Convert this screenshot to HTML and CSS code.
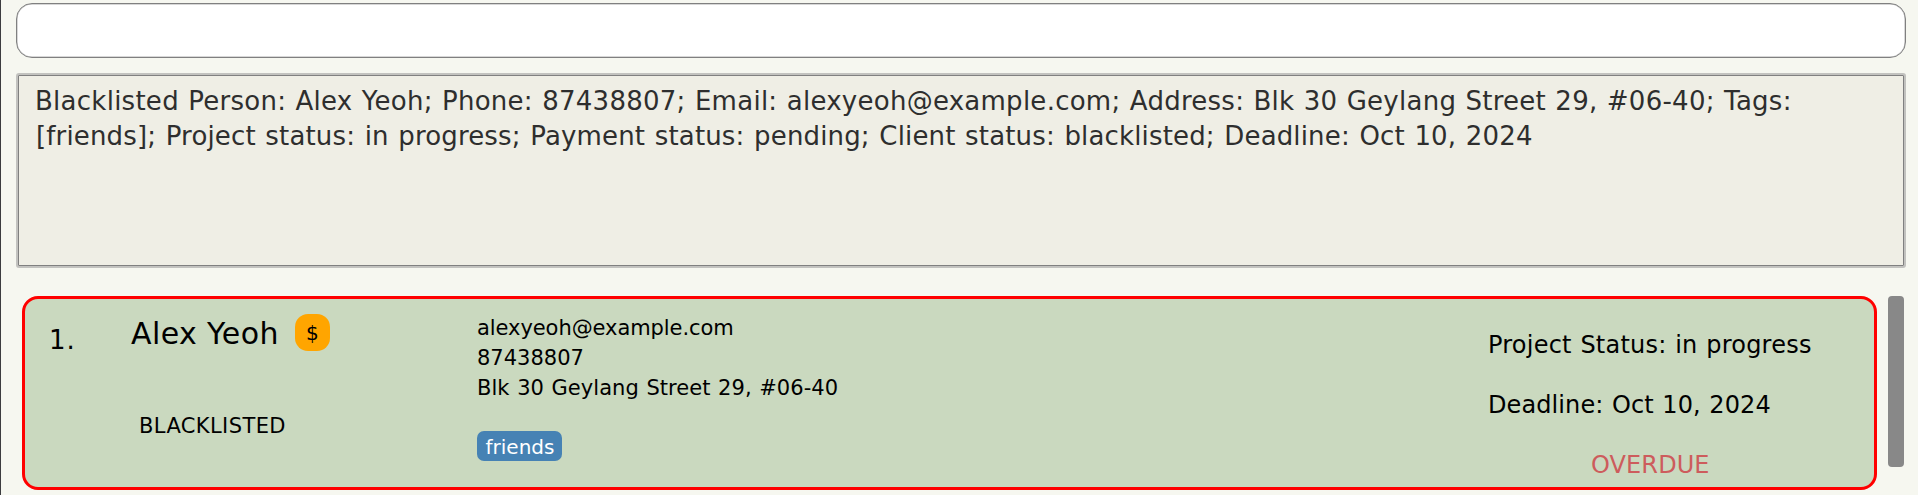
FILE: index.html
```html
<!DOCTYPE html>
<html lang="en">
<head>
<meta charset="utf-8">
<title>Address Book</title>
<link rel="stylesheet" href="styles.css">
</head>
<body>
<main class="app">
  <input class="command" type="text" aria-label="Command">
  <section class="result">
    <div class="line-first">Blacklisted Person: Alex Yeoh; Phone: 87438807; Email: alexyeoh@example.com; Address: Blk 30 Geylang Street 29, #06-40; Tags:</div>
    <div class="line-second">[friends]; Project status: in progress; Payment status: pending; Client status: blacklisted; Deadline: Oct 10, 2024</div>
  </section>
  <div class="list">
    <article class="card">
      <div class="index">1.</div>
      <div class="person">
        <div class="heading"><span class="name">Alex Yeoh</span><span class="payment">$</span></div>
        <div class="client">BLACKLISTED</div>
      </div>
      <div class="contact">
        <div class="email">alexyeoh@example.com</div>
        <div>87438807</div>
        <div class="address">Blk 30 Geylang Street 29, #06-40</div>
        <span class="tag">friends</span>
      </div>
      <div class="project">
        <div class="status">Project Status: in progress</div>
        <div class="deadline">Deadline: Oct 10, 2024</div>
        <div class="overdue">OVERDUE</div>
      </div>
    </article>
    <div class="scrollbar"></div>
  </div>
</main>
</body>
</html>
```
FILE: styles.css
```css
* { box-sizing: border-box; }
body {
  margin: 0;
  background: #f6f7f0;
  font-family: Verdana, "DejaVu Sans", sans-serif;
  color: #000;
}
.app {
  display: flex;
  flex-direction: column;
  height: 495px;
  padding: 3px 12px 0 15px;
  border-left: 1px solid #3c3c3f;
  overflow: hidden;
}
.command {
  flex: none;
  width: 100%;
  height: 55px;
  padding: 0 16px;
  border: 1px solid #808080;
  border-radius: 16px;
  background: #fff;
  box-shadow: inset 0 0 0 0.5px #b0b0b0;
  outline: none;
}
.result {
  flex: none;
  height: 195px;
  margin-top: 15px;
  padding: 9px 17px;
  border: 2px solid #c2c2bf;
  border-radius: 3px;
  background: #efeee5;
  box-shadow: inset 0 0 0 1px #808080;
  color: #2e2e2e;
  font-size: 26px;
  line-height: 35px;
  white-space: nowrap;
}
.line-first { letter-spacing: 0.26px; word-spacing: 0.8px; }
.line-second { padding-left: 1px; letter-spacing: 0.15px; word-spacing: 1.2px; }
.list {
  display: flex;
  gap: 11px;
  margin-top: 28px;
  padding: 0 2px 0 6px;
}
.card {
  display: flex;
  flex: 1;
  height: 194px;
  border: 3px solid #f00;
  border-radius: 16px;
  background: #cad9bf;
  white-space: nowrap;
}
.index { width: 106px; padding: 24px 0 0 24px; font-size: 26px; line-height: 35px; letter-spacing: 1px; }
.person { width: 346px; }
.heading { display: flex; gap: 16px; padding-top: 15px; }
.name { padding-top: 2px; font-size: 30px; line-height: 36px; letter-spacing: 0.4px; }
.payment {
  width: 35px;
  height: 37px;
  border-radius: 13px;
  background: orange;
  font-size: 20px;
  line-height: 38px;
  text-align: center;
}
.client { padding: 59px 0 0 8px; font-size: 21px; line-height: 30px; letter-spacing: 0.4px; }
.contact { flex: 1; padding-top: 14px; font-size: 21px; line-height: 30px; }
.email { letter-spacing: -0.07px; }
.address { letter-spacing: 0.04px; word-spacing: 0.9px; }
.tag {
  display: block;
  width: 85px;
  height: 30px;
  margin-top: 28px;
  padding-left: 1px;
  border-radius: 7px;
  background: #4682b4;
  color: #fff;
  font-size: 20px;
  line-height: 32px;
  text-align: center;
}
.project { width: 386px; padding-top: 16px; font-size: 24px; line-height: 60px; }
.status { letter-spacing: 0.23px; word-spacing: 0.8px; }
.deadline { letter-spacing: 0.1px; word-spacing: 0.8px; }
.overdue { padding-left: 103px; color: #cd5c5c; letter-spacing: 0.1px; }
.scrollbar { width: 16px; height: 171px; border-radius: 4px; background: #888; }
```
